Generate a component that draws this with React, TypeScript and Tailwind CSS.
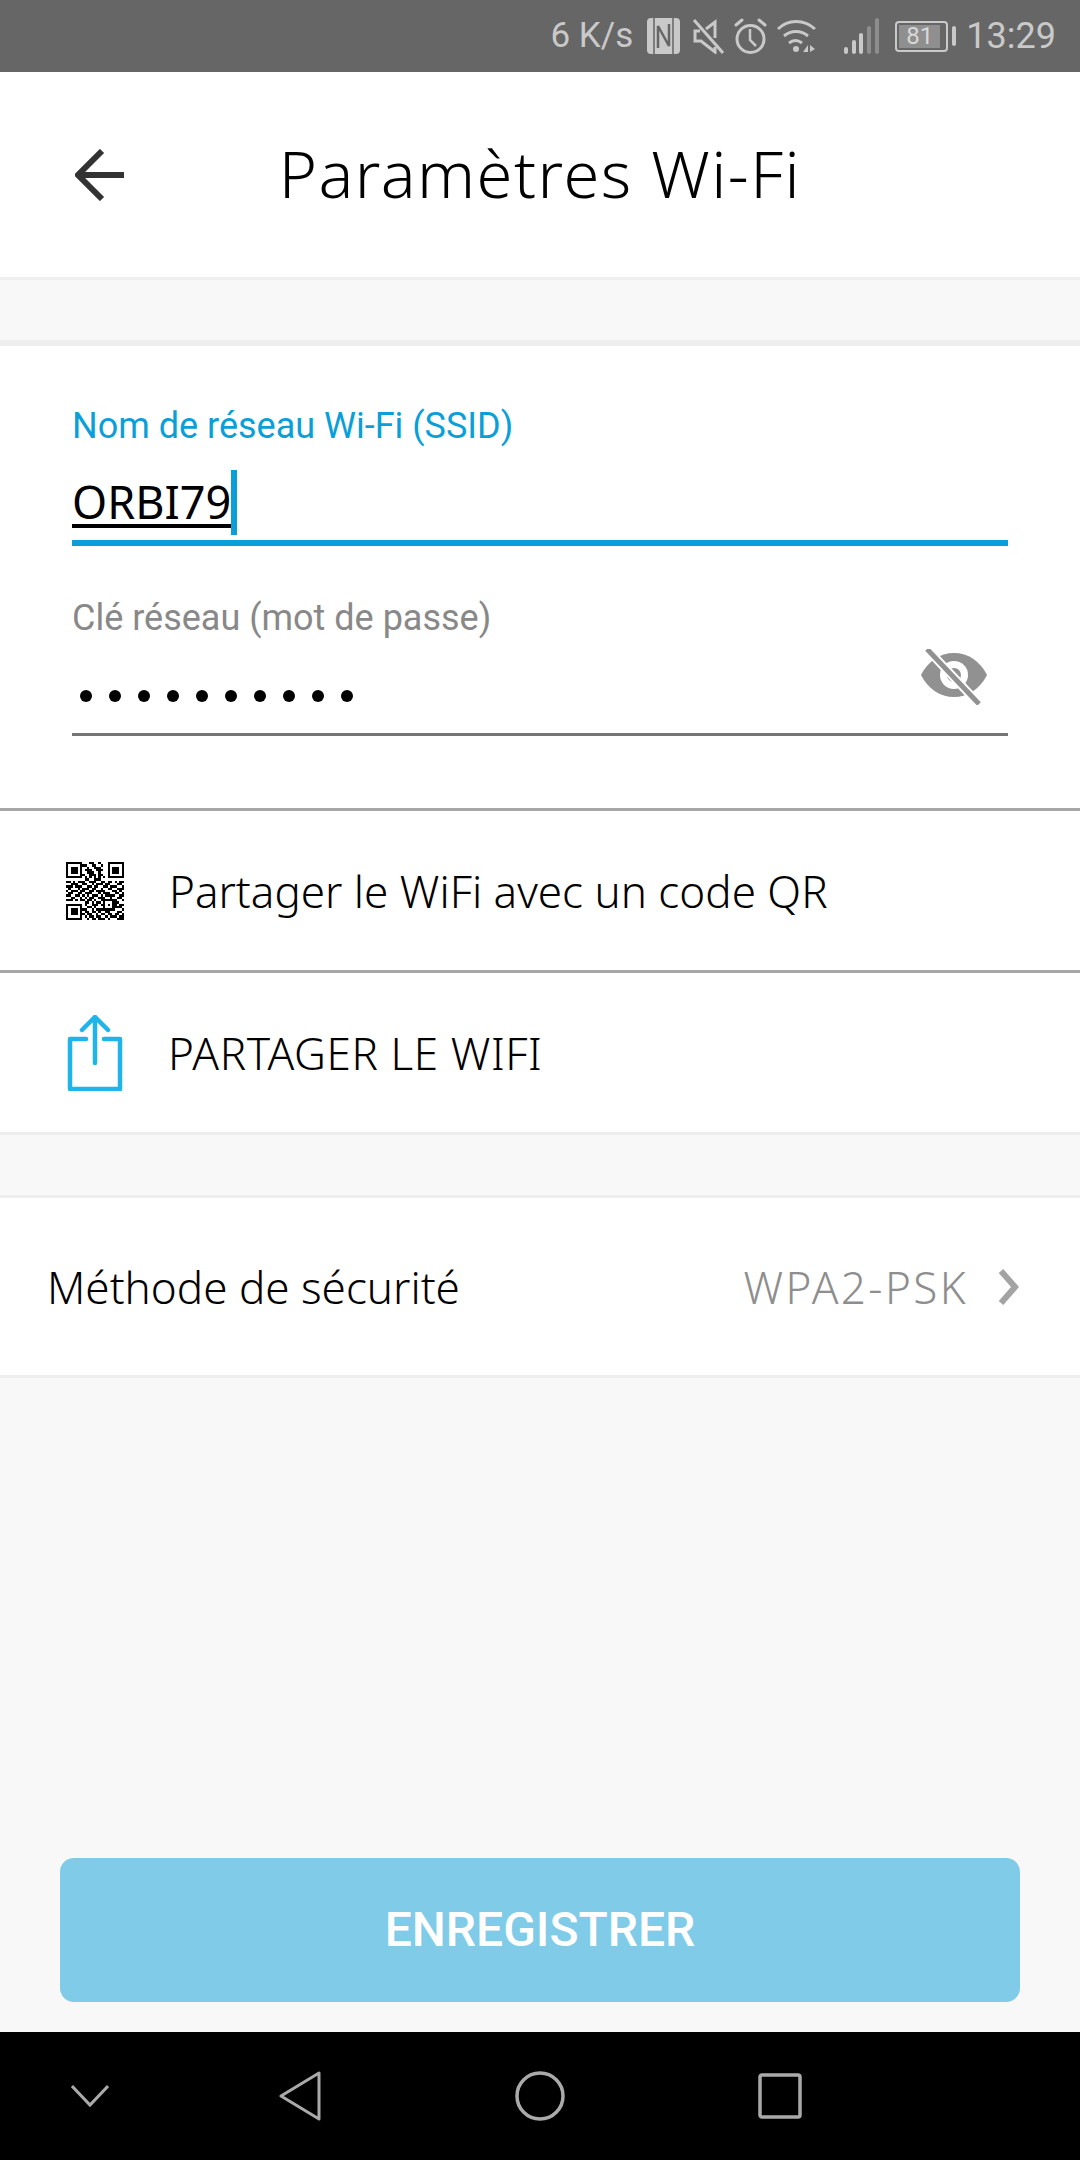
const QR = [
  '1111111000110010001111111',
  '1000001110011001001000001',
  '1011101001001110001011101',
  '1011101011100111001011101',
  '1011101001110010001011101',
  '1000001100111011001000001',
  '1111111010101010101111111',
  '0000000011001110000000000',
  '1101011100111001101101011',
  '0011100110010111011000110',
  '1110111001101100110111001',
  '0100010111011001001100111',
  '1011101100110111100011010',
  '0110011011100010111001101',
  '1100110101011101011110011',
  '0011001010110011100100110',
  '1110101101101001111111001',
  '0000000011010110100011100',
  '1111111010011101101011011',
  '1000001001101000100011110',
  '1011101110010111111110001',
  '1011101011011010011000110',
  '1011101101100101101101101',
  '1000001010110110010111011',
  '1111111001011011101000111',
];

function QrIcon() {
  return (
    <svg width="58" height="58" viewBox="0 0 25 25" shapeRendering="crispEdges">
      {QR.map((row, y) =>
        row.split('').map((c, x) => (c === '1' ? <rect key={`${x}-${y}`} x={x} y={y} width="1" height="1" fill="#000" /> : null)),
      )}
    </svg>
  );
}

function StatusBar() {
  return (
    <div className="h-[72px] shrink-0 bg-[#666666] flex items-center justify-end pr-[24px] text-[#c9c9c9] font-['Roboto',sans-serif]">
      <span className="text-[35px] leading-[72px] mr-[14px]">6 K/s</span>
      {/* nfc */}
      <svg width="33" height="36" viewBox="0 0 33 36" className="mr-[12px]">
        <rect width="33" height="36" rx="4" fill="#c9c9c9" />
        <path d="M7 0v36M26 0v36" stroke="#666" strokeWidth="1.5" />
        <path d="M11 30V8l11 20V6" fill="none" stroke="#666" strokeWidth="2.5" />
      </svg>
      {/* mute */}
      <svg width="32" height="36" viewBox="0 0 32 36" className="mr-[10px]" fill="none" stroke="#c9c9c9" strokeWidth="3">
        <path d="M2 2l29 33" />
        <path d="M23 20V4l-9 7M8 13H3v10h6l14 11v-5" />
      </svg>
      {/* alarm */}
      <svg width="33" height="36" viewBox="0 0 33 36" className="mr-[10px]" fill="none" stroke="#c9c9c9" strokeWidth="3">
        <circle cx="16.5" cy="21" r="13.5" />
        <path d="M16 11v11l6 6" strokeWidth="2.5" />
        <path d="M2 7l6-5M31 7l-6-5" strokeLinecap="round" />
      </svg>
      {/* wifi */}
      <svg width="39" height="36" viewBox="0 0 39 36" className="mr-[28px]" fill="none" stroke="#c9c9c9" strokeWidth="3">
        <path d="M1 11c10-10 26-10 37 0" />
        <path d="M7 18c7-6 17-6 24 0" />
        <path d="M12 25c4-3 9-3 13 0" />
        <circle cx="19" cy="31" r="3" fill="#c9c9c9" stroke="none" />
        <path d="M26 34l5-7v7zM33 27l5 4-5 3z" fill="#c9c9c9" stroke="none" />
      </svg>
      {/* signal */}
      <svg width="35" height="36" viewBox="0 0 35 36" className="mr-[16px]">
        <rect x="0" y="29" width="4" height="7" rx="2" fill="#c9c9c9" />
        <rect x="8" y="22" width="4" height="14" rx="2" fill="#c9c9c9" />
        <rect x="15" y="15" width="4" height="21" rx="2" fill="#c9c9c9" />
        <rect x="23" y="8" width="4" height="28" rx="2" fill="#8d8d8d" />
        <rect x="31" y="0" width="4" height="36" rx="2" fill="#8d8d8d" />
      </svg>
      {/* battery */}
      <div className="flex items-center mr-[10px]">
        <div className="w-[53px] h-[31px] border-2 border-[#c9c9c9] rounded-[4px] p-[2px] flex">
          <div className="w-[41px] bg-[#8f8f8f] text-[#d8d8d8] text-[24px] leading-[23px] text-center">81</div>
        </div>
        <div className="w-[4px] h-[20px] ml-[4px] bg-[#c9c9c9] rounded-full" />
      </div>
      <span className="text-[36px] leading-[72px]">13:29</span>
    </div>
  );
}

function NavBar() {
  return (
    <div className="h-[128px] shrink-0 bg-black flex items-start pt-[39px] pl-[71px]">
      <svg width="38" height="50" viewBox="0 0 38 50" fill="none" stroke="#aaaaaa" strokeWidth="3" className="mr-[170px]">
        <path d="M1 15l18 19 18-19" />
      </svg>
      <svg width="42" height="50" viewBox="0 0 42 50" fill="none" stroke="#aaaaaa" strokeWidth="3" strokeLinejoin="round" className="mr-[194px]">
        <path d="M40 2v46L2 25z" />
      </svg>
      <svg width="50" height="50" viewBox="0 0 50 50" fill="none" stroke="#aaaaaa" strokeWidth="3.5" className="mr-[193px]">
        <circle cx="25" cy="25" r="23" />
      </svg>
      <svg width="44" height="46" viewBox="0 0 44 46" fill="none" stroke="#aaaaaa" strokeWidth="3.5" className="mt-[2px]">
        <rect x="2" y="2" width="40" height="42" rx="2" />
      </svg>
    </div>
  );
}

export default function App() {
  return (
    <div className="w-[1080px] h-[2160px] flex flex-col bg-[#f8f8f8] font-['Noto_Sans',sans-serif] overflow-hidden">
      <StatusBar />

      <div className="h-[208px] shrink-0 bg-white border-b-[3px] border-[#eeeeee] relative flex items-center justify-center pb-[3px]">
        <svg width="50" height="52" viewBox="0 0 50 52" fill="none" stroke="#333333" strokeWidth="6" className="absolute left-[75px] top-[77px]">
          <path d="M27 2L3 26l24 24M3 26h46" />
        </svg>
        <h1 className="text-[65px] leading-[80px] font-light tracking-[1.5px] text-black">Paramètres Wi-Fi</h1>
      </div>

      <div className="h-[66px] shrink-0 border-b-[6px] border-[#eeeeee]" />

      <div className="bg-white shrink-0">
        <div className="px-[72px] pt-[56px] pb-[72px] font-['Roboto',sans-serif]">
          <div className="text-[36px] leading-[48px] text-[#0a9fd8]">Nom de réseau Wi-Fi (SSID)</div>
          <div className="h-[96px] border-b-[6px] border-[#0a9fd8] flex items-start pt-[22px]">
            <span className="text-[45px] leading-[60px] text-black underline decoration-[4px] underline-offset-[5px] font-['Noto_Sans',sans-serif]">ORBI79</span>
            <span className="w-[6px] h-[65px] -mt-[2px] bg-[#0a9fd8]" />
          </div>
          <div className="text-[36px] leading-[48px] text-[#888888] mt-[48px]">Clé réseau (mot de passe)</div>
          <div className="h-[94px] border-b-[3px] border-[#757575] flex items-start justify-between">
            <div className="flex gap-[17px] pl-[8px] pt-[48px]">
              {Array.from({ length: 10 }).map((_, i) => (
                <span key={i} className="w-[12px] h-[12px] rounded-full bg-black" />
              ))}
            </div>
            <svg width="66" height="56" viewBox="0 0 66 56" className="mr-[21px] mt-[7px]">
              <path d="M0 26C7 12 19 4 33 4s26 8 33 22c-7 14-19 22-33 22S7 40 0 26z" fill="#919191" />
              <circle cx="33" cy="26" r="14" fill="#fff" />
              <circle cx="33" cy="26" r="7" fill="#919191" />
              <path d="M6 0l52 55" stroke="#fff" strokeWidth="9" />
              <path d="M6 0l52 55" stroke="#919191" strokeWidth="5" />
            </svg>
          </div>
        </div>

        <div className="h-[162px] border-t-[3px] border-[#a6a6a6] flex items-center">
          <div className="w-[66px] ml-[66px] mr-[37px] flex">
            <QrIcon />
          </div>
          <span className="text-[44px] text-black font-light">Partager le WiFi avec un code QR</span>
        </div>
        <div className="h-[162px] border-t-[3px] border-[#a6a6a6] flex items-center">
          <svg width="56" height="76" viewBox="0 0 56 76" fill="none" stroke="#1fb4ea" strokeWidth="4.5" strokeLinecap="round" strokeLinejoin="round" className="ml-[67px] mr-[45px]">
            <path d="M19 24H3v50h50V24H37" />
            <path d="M28 48V2M15 15L28 2l13 13" />
          </svg>
          <span className="text-[44px] tracking-[0.6px] text-black font-light">PARTAGER LE WIFI</span>
        </div>
      </div>

      <div className="h-[66px] shrink-0 border-y-[3px] border-[#eeeeee]" />

      <div className="h-[180px] shrink-0 bg-white border-b-[3px] border-[#eeeeee] flex items-center justify-between pl-[47px] pr-[60px]">
        <span className="text-[44px] text-black font-light">Méthode de sécurité</span>
        <div className="flex items-center">
          <span className="text-[44px] tracking-[2.4px] text-[#8e8e8e] font-light mr-[30px]">WPA2-PSK</span>
          <svg width="22" height="36" viewBox="0 0 22 36" fill="none" stroke="#a3a3a3" strokeWidth="6">
            <path d="M3 2l14 16L3 34" />
          </svg>
        </div>
      </div>

      <div className="flex-1 flex items-end px-[60px] pb-[30px]">
        <div className="w-[960px] h-[144px] bg-[#80cbe8] rounded-[14px] flex items-center justify-center">
          <span className="text-[48px] font-medium text-white font-['Roboto',sans-serif]">ENREGISTRER</span>
        </div>
      </div>

      <NavBar />
    </div>
  );
}
